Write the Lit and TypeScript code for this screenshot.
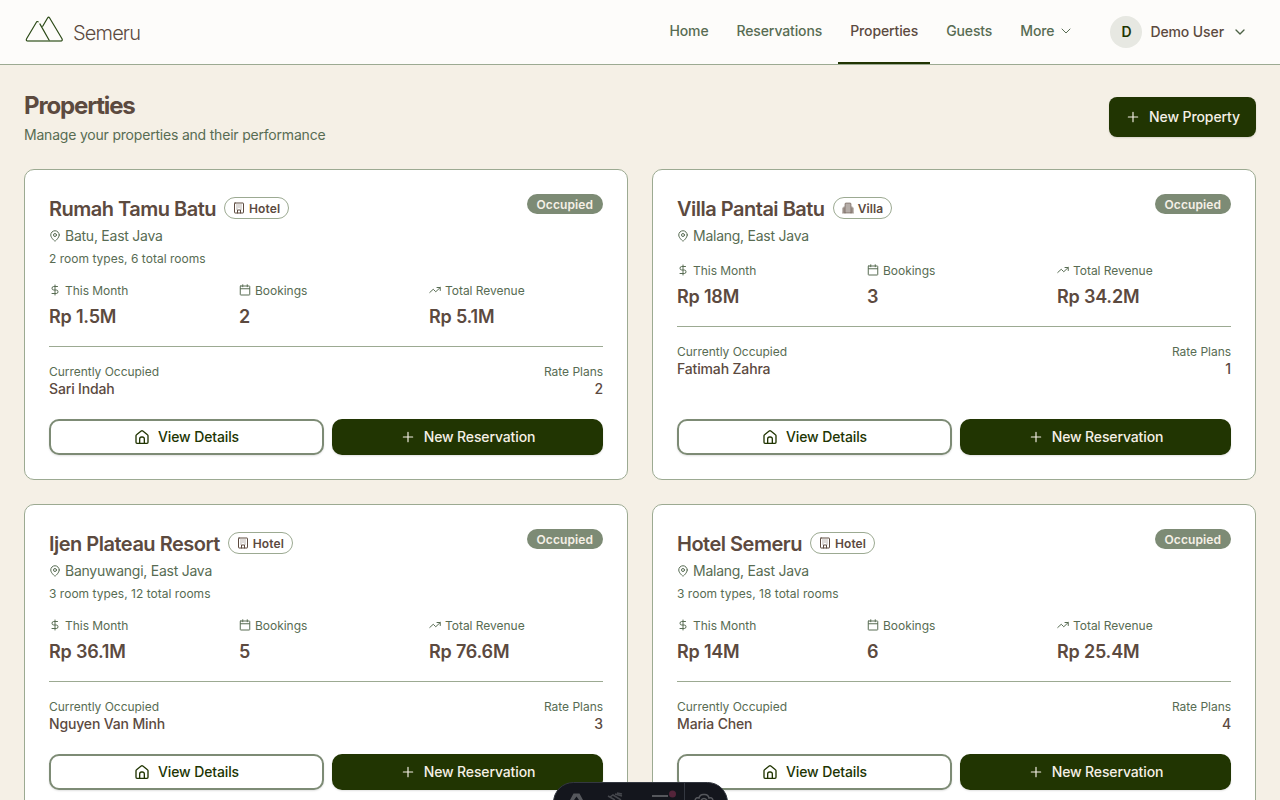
import { LitElement, html, css, svg, nothing } from "lit";
import { customElement, property } from "lit/decorators.js";

const paths: Record<string, unknown> = {
  plus: svg`<path d="M5 12h14M12 5v14"/>`,
  chevron: svg`<path d="m6 9 6 6 6-6"/>`,
  pin: svg`<path d="M20.500 10c0 6-8.500 12.500-8.500 12.500S3.500 16 3.500 10a8.500 8.500 0 0 1 17 0Z"/><circle cx="12" cy="10" r="3"/>`,
  dollar: svg`<path d="M12 2v20M17 5H9.500a3.500 3.500 0 0 0 0 7h5a3.500 3.500 0 0 1 0 7H6"/>`,
  calendar: svg`<path d="M7.500 1.500v4M16.500 1.500v4M3 9.500h18"/><rect width="19" height="18" x="2.500" y="4" rx="1"/>`,
  trend: svg`<path d="m22.500 7-9 8.500-5-5L1.500 17"/><path d="M16 7h6.500v6"/>`,
  home: svg`<path d="M3 10.200a2 2 0 0 1 .8-1.600l7-5.600a2 2 0 0 1 2.400 0l7 5.600a2 2 0 0 1 .8 1.600V20a1.500 1.500 0 0 1-1.500 1.500h-15A1.500 1.500 0 0 1 3 20z"/><path d="M8.500 21v-6a3 3 0 0 1 3-3h1a3 3 0 0 1 3 3v6"/>`,
  hotel: svg`<rect width="18" height="20" x="3" y="2" rx="1"/><path d="M9 22v-6h6v6M8 6h.01M12 6h.01M16 6h.01M8 10h.01M12 10h.01M16 10h.01M8 14h.01M16 14h.01"/>`,
  villa: svg`<path fill="currentColor" stroke="none" opacity=".45" d="M6 22V4a2 2 0 0 1 2-2h8a2 2 0 0 1 2 2v18ZM6 9H4a3 3 0 0 0-3 3v10h5zM18 9h2a3 3 0 0 1 3 3v10h-5z"/><path opacity=".55" d="M6 22V4a2 2 0 0 1 2-2h8a2 2 0 0 1 2 2v18M1 22h22M1.500 14h3M19.500 14h3M1.500 18h3M19.500 18h3"/>`,
};

const icon = (name: string, size: number, stroke = 2) => html`<svg width=${size} height=${size} viewBox="0 0 24 24"
  fill="none" stroke="currentColor" stroke-width=${stroke} stroke-linecap="round" stroke-linejoin="round">${paths[name]}</svg>`;

interface Property {
  name: string; kind: "Hotel" | "Villa"; place: string; rooms?: string;
  month: string; bookings: number; revenue: string; guest: string; plans: number;
}

const properties: Property[] = [
  { name: "Rumah Tamu Batu", kind: "Hotel", place: "Batu, East Java", rooms: "2 room types, 6 total rooms", month: "Rp 1.5M", bookings: 2, revenue: "Rp 5.1M", guest: "Sari Indah", plans: 2 },
  { name: "Villa Pantai Batu", kind: "Villa", place: "Malang, East Java", month: "Rp 18M", bookings: 3, revenue: "Rp 34.2M", guest: "Fatimah Zahra", plans: 1 },
  { name: "Ijen Plateau Resort", kind: "Hotel", place: "Banyuwangi, East Java", rooms: "3 room types, 12 total rooms", month: "Rp 36.1M", bookings: 5, revenue: "Rp 76.6M", guest: "Nguyen Van Minh", plans: 3 },
  { name: "Hotel Semeru", kind: "Hotel", place: "Malang, East Java", rooms: "3 room types, 18 total rooms", month: "Rp 14M", bookings: 6, revenue: "Rp 25.4M", guest: "Maria Chen", plans: 4 },
];

const base = css`
  * { box-sizing: border-box; }
  svg { display: block; flex: none; }
  .btn { display: flex; align-items: center; justify-content: center; gap: 8px; font-size: 14px; line-height: 20px; font-weight: 500; letter-spacing: -.13px; white-space: nowrap; box-shadow: 0 1px 2px rgb(0 0 0 / .12); }
  .primary { background: #213502; color: #f5f0e6; }
`;

@customElement("property-card")
export class PropertyCard extends LitElement {
  @property({ attribute: false }) item!: Property;

  static styles = [base, css`
    :host { display: flex; flex-direction: column; box-sizing: border-box; height: 311px; padding: 24px; background: #fff; border: 1px solid #9caa92; border-radius: 10px; }
    .top { display: flex; justify-content: space-between; align-items: flex-start; }
    .title { display: flex; align-items: center; gap: 8px; height: 28px; }
    h2 { margin: 0; font-size: 20px; line-height: 28px; font-weight: 600; letter-spacing: -.5px; padding-top: 2px; }
    .kind { display: flex; align-items: center; gap: 4px; height: 22px; padding: 0 8px; border: 1px solid #9caa92; border-radius: 11px; font-size: 12px; font-weight: 600; letter-spacing: .1px; }
    .status { height: 20px; padding: 0 10px; border-radius: 10px; background: #7d8b75; color: #f5f0e6; font-size: 12px; line-height: 21px; font-weight: 600; letter-spacing: .09px; }
    .place { display: flex; align-items: center; gap: 4px; margin-top: 4px; font-size: 14px; line-height: 20px; letter-spacing: -.25px; color: #586c53; }
    .rooms { margin-top: 4px; height: 16px; font-size: 12px; line-height: 18px; letter-spacing: .02px; color: #586c53; }
    .stats { display: grid; grid-template-columns: repeat(3, 1fr); gap: 16px; margin-top: 16px; padding-bottom: 16px; border-bottom: 1px solid #9caa92; }
    .label { display: flex; align-items: center; gap: 4px; height: 16px; font-size: 12px; line-height: 16px; letter-spacing: -.03px; color: #586c53; }
    .label span { padding-top: 2px; }
    .value { margin-top: 4px; height: 28px; font-size: 18px; line-height: 30px; font-weight: 600; letter-spacing: -.2px; }
    .foot { display: flex; justify-content: space-between; padding-top: 16px; }
    .right { text-align: right; }
    .right .label { justify-content: flex-end; }
    .strong { font-size: 14px; line-height: 20px; font-weight: 500; letter-spacing: -.15px; }
    .actions { display: flex; gap: 8px; margin-top: auto; }
    .actions .btn { flex: 1 1 0; height: 36px; padding: 0 12px; border-radius: 10px; }
    .outline { border: 2px solid #7d8b75; color: #213502; background: #fff; }
  `];

  render() {
    const p = this.item;
    const stat = (name: string, label: string, value: string | number) => html`
      <div><div class="label">${icon(name, 12)}<span>${label}</span></div><div class="value">${value}</div></div>`;
    return html`
      <div class="top">
        <div class="title"><h2>${p.name}</h2><span class="kind">${icon(p.kind.toLowerCase(), 12)}<span>${p.kind}</span></span></div>
        <span class="status">Occupied</span>
      </div>
      <div class="place">${icon("pin", 12)}<span>${p.place}</span></div>
      ${p.rooms ? html`<div class="rooms">${p.rooms}</div>` : nothing}
      <div class="stats">
        ${stat("dollar", "This Month", p.month)}${stat("calendar", "Bookings", p.bookings)}${stat("trend", "Total Revenue", p.revenue)}
      </div>
      <div class="foot">
        <div><div class="label"><span>Currently Occupied</span></div><div class="strong">${p.guest}</div></div>
        <div class="right"><div class="label"><span>Rate Plans</span></div><div class="strong">${p.plans}</div></div>
      </div>
      <div class="actions">
        <div class="btn outline">${icon("home", 16)}<span>View Details</span></div>
        <div class="btn primary">${icon("plus", 16, 1.75)}<span>New Reservation</span></div>
      </div>`;
  }
}

@customElement("app-root")
export class AppRoot extends LitElement {
  static styles = [base, css`
    :host { display: block; height: 800px; overflow: hidden; position: relative; background: #f5f0e6; color: #5c4a3f; font-family: Inter, sans-serif; }
    header { display: flex; justify-content: space-between; height: 65px; padding: 0 24px; background: #fdfcfa; border-bottom: 1px solid #9caa92; }
    .brand { display: flex; align-items: center; gap: 8px; height: 64px; font-size: 20px; font-weight: 300; letter-spacing: -.85px; }
    .brand svg { margin-bottom: 4px; }
    .brand span { padding-top: 2px; }
    .right { display: flex; height: 64px; }
    nav { display: flex; gap: 4px; font-size: 14px; font-weight: 500; letter-spacing: -.12px; color: #586c53; }
    .link { display: flex; align-items: center; gap: 4px; padding: 0 12px 1px; border-bottom: 2px solid transparent; }
    .active { color: #5c4a3f; border-color: #213502; }
    .user { display: flex; align-items: center; gap: 8px; margin-left: 24px; padding-right: 8px; font-size: 14px; line-height: 20px; font-weight: 500; letter-spacing: -.1px; }
    .user svg { color: #4d6246; }
    .user .name { padding-bottom: 1px; }
    .avatar { width: 32px; height: 32px; border-radius: 50%; background: #e7e8e2; color: #213502; line-height: 32px; text-align: center; font-weight: 600; }
    main { padding: 24px; }
    .head { display: flex; align-items: center; justify-content: space-between; height: 56px; }
    h1 { margin: 0; height: 32px; font-size: 24px; line-height: 34px; font-weight: 700; letter-spacing: -1.15px; }
    .sub { margin-top: 4px; font-size: 14px; line-height: 20px; letter-spacing: -.2px; color: #586c53; }
    .head .btn { height: 40px; padding: 0 16px; border-radius: 8px; letter-spacing: -.1px; }
    .grid { display: grid; grid-template-columns: 1fr 1fr; gap: 24px; margin-top: 24px; }
    .toolbar { position: absolute; left: 553px; top: 782px; }
  `];

  render() {
    return html`
      <header>
        <div class="brand">
          <svg width="41" height="28" viewBox="0 0 41 28" fill="none" stroke="#2c4a17" stroke-width="1.200" stroke-linejoin="round" stroke-linecap="round">
            <path d="M18.700 10.300 23.700 1.800q.9-1.300 1.800 0L38 22.700q.9 2-1 2.300H3.500q-1.800-.3-.9-2.200L12.400 6.200q.8-1.200 1.700-.4"/>
            <path d="M15.900 7.900 25.300 24.500"/><path d="M4 25h33" stroke="#6f8760"/>
          </svg>
          <span>Semeru</span>
        </div>
        <div class="right">
          <nav>
            <span class="link">Home</span><span class="link">Reservations</span><span class="link active">Properties</span>
            <span class="link">Guests</span><span class="link">More ${icon("chevron", 16, 1.5)}</span>
          </nav>
          <div class="user"><span class="avatar">D</span><span class="name">Demo User</span>${icon("chevron", 16)}</div>
        </div>
      </header>
      <main>
        <div class="head">
          <div><h1>Properties</h1><div class="sub">Manage your properties and their performance</div></div>
          <div class="btn primary">${icon("plus", 16, 1.75)}<span>New Property</span></div>
        </div>
        <div class="grid">${properties.map((p) => html`<property-card .item=${p}></property-card>`)}</div>
      </main>
      <svg class="toolbar" width="175" height="18" viewBox="0 0 175 18" fill="none">
        <rect x=".5" y=".5" width="174" height="40" rx="20" fill="#14161d" stroke="#343841"/>
        <path d="M131.500 1v17" stroke="#343841"/>
        <path d="M17 18 20.500 11.500h6L30 18h-4l-2.500-3.500L21 18z" fill="#55575c"/>
        <path d="m55 14 7 4M57 15l3-2 8 5M62 12l7 2M64 11l5 1" stroke="#44464c" stroke-width="1.500"/>
        <path d="M99 14h16" stroke="#55575c" stroke-width="2"/>
        <circle cx="119.500" cy="12" r="3.500" fill="#54243a"/>
        <path d="M142 18q1-3 4-2 1-4 5-3.500Q155 12 156 16q3-1 4 2M148 18q3-3 6 0" stroke="#55575c" stroke-width="1.500"/>
      </svg>`;
  }
}
